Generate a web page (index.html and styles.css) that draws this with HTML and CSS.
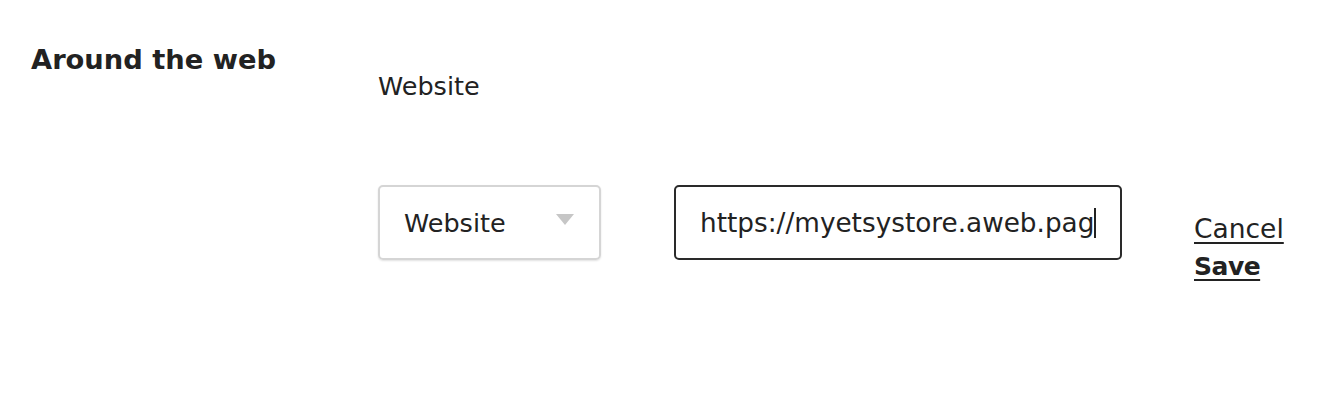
FILE: index.html
```html
<!DOCTYPE html>
<html>
<head>
<meta charset="utf-8">
<link rel="stylesheet" href="styles.css">
</head>
<body>
<div class="section">
  <h2 class="section-title">Around the web</h2>
  <div class="section-body">
    <div class="field-label">Website</div>
    <div class="row">
      <div class="select">
        <span class="select-value">Website</span>
        <span class="select-caret"></span>
      </div>
      <div class="input">
        <span class="input-text">https://myetsystore.aweb.pag</span><span class="caret"></span>
      </div>
      <div class="actions">
        <a class="link">Cancel</a>
        <a class="link link-bold">Save</a>
      </div>
    </div>
  </div>
</div>
</body>
</html>
```
FILE: styles.css
```css
html, body {
  margin: 0;
  padding: 0;
  background: #fff;
}
body {
  font-family: "DejaVu Sans", Inter, sans-serif;
  color: #222;
}
.section {
  display: flex;
  padding: 42px 0 0 31px;
}
.section-title {
  width: 347px;
  margin: 0;
  font-size: 27.3px;
  font-weight: 700;
  line-height: 36px;
  color: #222;
}
.section-body {
  display: flex;
  flex-direction: column;
}
.field-label {
  font-size: 25.5px;
  line-height: 30px;
  margin-top: 29px;
}
.row {
  display: flex;
  align-items: flex-start;
  margin-top: 84px;
}
.select {
  box-sizing: border-box;
  width: 223px;
  height: 75px;
  border: 2px solid #d5d5d5;
  border-radius: 5px;
  box-shadow: 0 1px 2px rgba(0,0,0,0.12);
  display: flex;
  align-items: center;
  justify-content: space-between;
  padding: 0 25px 0 24px;
  font-size: 25.5px;
}
.select-caret {
  width: 0;
  height: 0;
  border-left: 9px solid transparent;
  border-right: 9px solid transparent;
  border-top: 11px solid #c6c6c6;
  margin-top: -6px;
}
.input {
  box-sizing: border-box;
  width: 448px;
  height: 75px;
  margin-left: 73px;
  border: 2px solid #2a2a2a;
  border-radius: 5px;
  display: flex;
  align-items: center;
  padding-left: 24px;
  font-size: 26.3px;
  overflow: hidden;
  white-space: nowrap;
}
.caret {
  display: inline-block;
  width: 2px;
  height: 30px;
  background: #222;
}
.actions {
  display: flex;
  flex-direction: column;
  margin-left: 72px;
  margin-top: 25px;
}
.link {
  font-size: 26.5px;
  line-height: 38px;
  text-decoration: underline;
  text-underline-offset: 4px;
  color: #222;
}
.link-bold {
  font-weight: 700;
  font-size: 25px;
  letter-spacing: -0.5px;
}
```
